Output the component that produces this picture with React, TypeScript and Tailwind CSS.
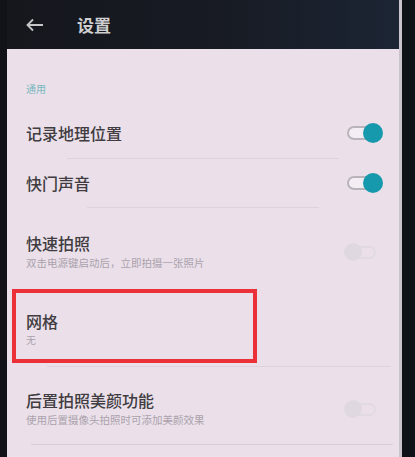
import React from 'react';

const font = { fontFamily: '"Noto Sans CJK SC", "Noto Sans", sans-serif' };

function Toggle({ on }: { on: boolean }) {
  if (on) {
    return (
      <div className="relative w-[36px] h-[20px]">
        <div className="absolute left-0 top-[3px] w-[28px] h-[14px] rounded-full border-2 border-[#b9b4bb] bg-[#f4eef4]" />
        <div className="absolute right-0 top-0 w-[20px] h-[20px] rounded-full bg-[#1699ac]" />
      </div>
    );
  }
  return (
    <div className="relative w-[32px] h-[18px] mr-[7px]">
      <div className="absolute right-0 top-[3px] w-[26px] h-[13px] rounded-full border-2 border-[#e2dae3]" />
      <div className="absolute left-0 top-0 w-[18px] h-[18px] rounded-full bg-[#e0d8e0]" />
    </div>
  );
}

function Row({
  title,
  sub,
  toggle,
  h,
}: {
  title: string;
  sub?: string;
  toggle?: boolean;
  h: string;
}) {
  return (
    <div className={`flex items-center justify-between pl-[19px] pr-[16px] ${h}`}>
      <div className="flex flex-col">
        <span className="text-[16px] leading-[22px] text-[#403c3f] font-medium">{title}</span>
        {sub && <span className="text-[10.5px] leading-[16px] text-[#aaa2ac] mt-[1px]">{sub}</span>}
      </div>
      {toggle !== undefined && <Toggle on={toggle} />}
    </div>
  );
}

export default function App() {
  return (
    <div className="w-[415px] h-[457px] overflow-hidden bg-[#0e1016] flex" style={font}>
      <div className="w-[7px] shrink-0 bg-[#121318]" />
      <div className="flex-1 flex flex-col">
        {/* header */}
        <div className="h-[49px] shrink-0 flex items-center bg-gradient-to-r from-[#15171d] via-[#171a22] to-[#1c2534]">
          <svg width="18" height="14" viewBox="0 0 18 14" className="ml-[19px]">
            <path d="M17 7H2M7 1.5L1.5 7L7 12.5" stroke="#c6c6c8" strokeWidth="1.8" fill="none" />
          </svg>
          <span className="ml-[33px] text-[17px] font-bold text-[#cfcfd0]">设置</span>
        </div>
        {/* panel */}
        <div className="flex-1 bg-[#ebe0ea] flex flex-col">
          <div className="h-[59px] shrink-0 flex items-end pl-[19px] pb-[12px]">
            <span className="text-[10px] text-[#79b7bf]">通用</span>
          </div>
          <Row title="记录地理位置" toggle={true} h="h-[50px]" />
          <div className="mx-[60px] h-px bg-[#ddd2dd]" />
          <Row title="快门声音" toggle={true} h="h-[48px]" />
          <div className="mx-[80px] h-px bg-[#ddd2dd]" />
          <Row title="快速拍照" sub="双击电源键启动后，立即拍摄一张照片" toggle={false} h="h-[81px] pt-[6px]" />
          <div className="h-[74px] shrink-0 flex">
            <div className="ml-[5px] w-[245px] h-[74px] border-[4px] border-[#ec3038] flex items-center pl-[10px] pt-[6px]">
              <div className="flex flex-col">
                <span className="text-[16px] leading-[22px] text-[#403c3f] font-medium">网格</span>
                <span className="text-[10px] leading-[16px] text-[#aaa2ac]">无</span>
              </div>
            </div>
          </div>
          <div className="ml-[40px] mr-[8px] h-px bg-[#ddd2dd] mt-[3px]" />
          <Row title="后置拍照美颜功能" sub="使用后置摄像头拍照时可添加美颜效果" toggle={false} h="h-[77px] pt-[6px]" />
          <div className="ml-[24px] mr-[6px] h-px bg-[#d8ccd8]" />
        </div>
      </div>
      <div className="w-[3px] shrink-0 bg-[#c9c3cc]" />
      <div className="w-[13px] shrink-0 bg-[#0f1118]" />
    </div>
  );
}
